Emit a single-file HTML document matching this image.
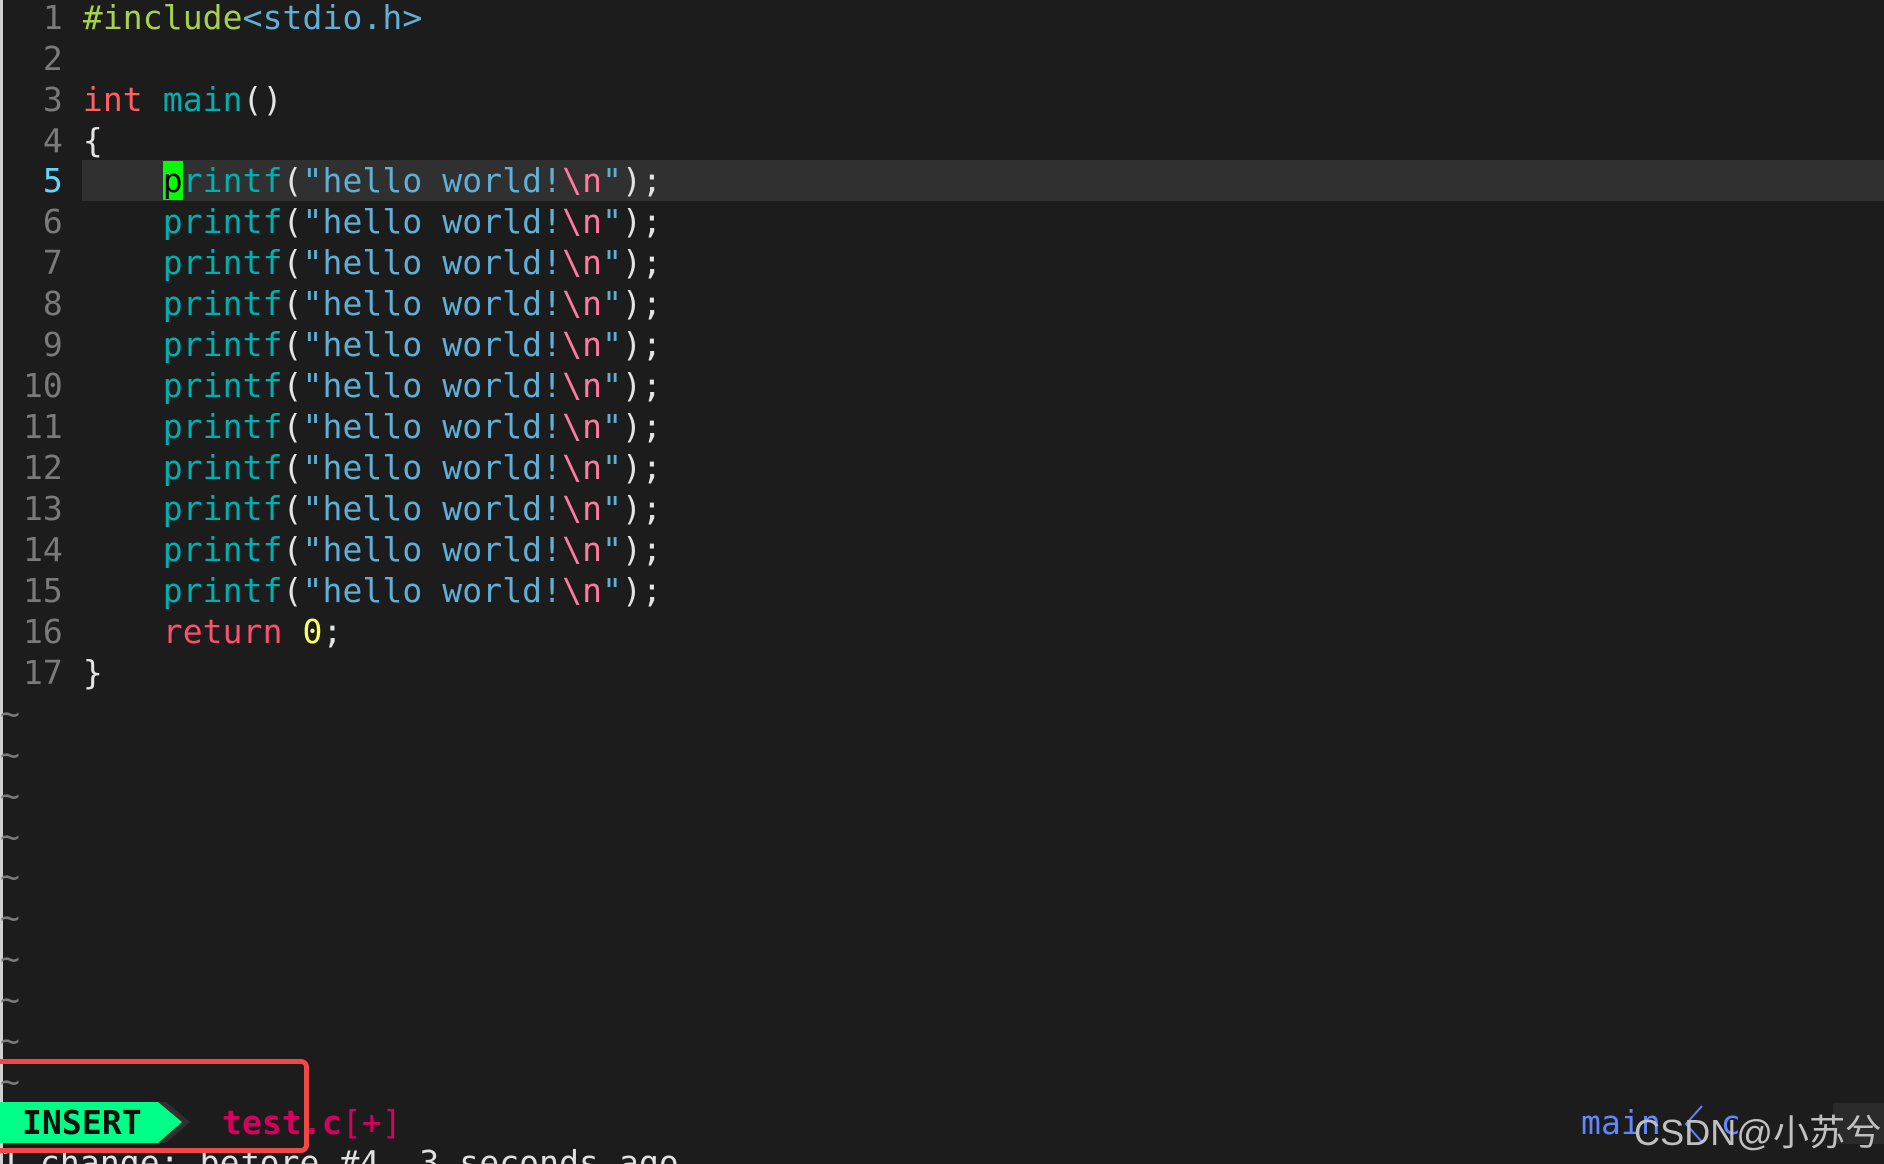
<!DOCTYPE html>
<html><head><meta charset="utf-8"><style>
html,body{margin:0;padding:0;width:1884px;height:1164px;overflow:hidden;background:#1c1c1c;}
body{position:relative;font-family:"DejaVu Sans Mono","Liberation Mono",monospace;font-size:33px;letter-spacing:0.1px;color:#e4e4e4;}
.border{position:absolute;left:0;top:0;width:3px;height:1164px;background:#d0d0d0;}
.l{position:absolute;left:3px;height:41px;line-height:41px;white-space:pre;width:1881px;}
.n{color:#7a7a7a;}
.cur{background:#303030;left:82px;width:1802px;}
.g{color:#a8d04a}.b{color:#5fafd7}.r{color:#ff5f5f}.t{color:#00afaf}.p{color:#ff79a0}.y{color:#ffff5f}.w{color:#e4e4e4}
.tl{color:#7a7a7a;position:absolute;left:0;}
.cursor{background:#00ff00;color:#000;}
</style></head><body>
<div class="border"></div>
<div class="l cur" style="top:160px"></div>
<div class="l" style="top:-3px"><span class="n">  1 </span><span class="g">#include</span><span class="b">&lt;stdio.h&gt;</span></div>
<div class="l" style="top:38px"><span class="n">  2 </span></div>
<div class="l" style="top:79px"><span class="n">  3 </span><span class="r">int</span> <span class="t">main</span>()</div>
<div class="l" style="top:120px"><span class="n">  4 </span>{</div>
<div class="l" style="top:160px"><span style="color:#5fd7ff">  5 </span>    <span class="cursor">p</span><span class="t">rintf</span>(<span class="b">"hello world!</span><span class="p">\n</span><span class="b">"</span>);</div>
<div class="l" style="top:201px"><span class="n">  6 </span>    <span class="t">printf</span>(<span class="b">"hello world!</span><span class="p">\n</span><span class="b">"</span>);</div>
<div class="l" style="top:242px"><span class="n">  7 </span>    <span class="t">printf</span>(<span class="b">"hello world!</span><span class="p">\n</span><span class="b">"</span>);</div>
<div class="l" style="top:283px"><span class="n">  8 </span>    <span class="t">printf</span>(<span class="b">"hello world!</span><span class="p">\n</span><span class="b">"</span>);</div>
<div class="l" style="top:324px"><span class="n">  9 </span>    <span class="t">printf</span>(<span class="b">"hello world!</span><span class="p">\n</span><span class="b">"</span>);</div>
<div class="l" style="top:365px"><span class="n"> 10 </span>    <span class="t">printf</span>(<span class="b">"hello world!</span><span class="p">\n</span><span class="b">"</span>);</div>
<div class="l" style="top:406px"><span class="n"> 11 </span>    <span class="t">printf</span>(<span class="b">"hello world!</span><span class="p">\n</span><span class="b">"</span>);</div>
<div class="l" style="top:447px"><span class="n"> 12 </span>    <span class="t">printf</span>(<span class="b">"hello world!</span><span class="p">\n</span><span class="b">"</span>);</div>
<div class="l" style="top:488px"><span class="n"> 13 </span>    <span class="t">printf</span>(<span class="b">"hello world!</span><span class="p">\n</span><span class="b">"</span>);</div>
<div class="l" style="top:529px"><span class="n"> 14 </span>    <span class="t">printf</span>(<span class="b">"hello world!</span><span class="p">\n</span><span class="b">"</span>);</div>
<div class="l" style="top:570px"><span class="n"> 15 </span>    <span class="t">printf</span>(<span class="b">"hello world!</span><span class="p">\n</span><span class="b">"</span>);</div>
<div class="l" style="top:611px"><span class="n"> 16 </span>    <span style="color:#ff4f6f">return</span> <span class="y">0</span>;</div>
<div class="l" style="top:652px"><span class="n"> 17 </span>}</div>
<div class="tl l" style="top:693px">~</div>
<div class="tl l" style="top:734px">~</div>
<div class="tl l" style="top:775px">~</div>
<div class="tl l" style="top:816px">~</div>
<div class="tl l" style="top:856px">~</div>
<div class="tl l" style="top:897px">~</div>
<div class="tl l" style="top:938px">~</div>
<div class="tl l" style="top:979px">~</div>
<div class="tl l" style="top:1020px">~</div>
<div class="tl l" style="top:1061px">~</div>
<svg style="position:absolute;left:0;top:1102px" width="210" height="41">
<polygon points="140,0 166,0 190,20 166,41 140,41" fill="#303030"/>
<polygon points="0,0 158,0 182,20 158,41 0,41" fill="#00ff87"/>
</svg>
<div class="l" style="top:1102px;left:22px;color:#111;font-weight:bold;">INSERT</div>
<div class="l" style="top:1102px;left:222px;color:#d7005f;font-weight:bold;">test.c<span style="font-weight:normal">[+]</span></div>
<div style="position:absolute;left:1833px;top:1103px;width:51px;height:41px;background:#2a2a2a"></div>
<div class="l" style="top:1102px;left:1581px;color:#5f87ff;width:300px">main   c</div>
<svg style="position:absolute;left:1682px;top:1102px" width="30" height="41"><polyline points="20,4 4,22 20,40" fill="none" stroke="#5f87ff" stroke-width="2"/></svg>
<div style="position:absolute;left:1634px;top:1104px;font-family:'Liberation Sans','Noto Sans CJK SC',sans-serif;font-size:36px;color:#c0c0c0;white-space:nowrap">CSDN@小苏兮</div>
<div class="l" style="top:1142px;left:0;color:#e0e0e0">1 change; before #4  3 seconds ago</div>
<div style="position:absolute;left:0;top:1059px;width:304px;height:84px;border:5px solid #f04848;border-left:none;border-radius:0 8px 8px 0"></div>
</body></html>
